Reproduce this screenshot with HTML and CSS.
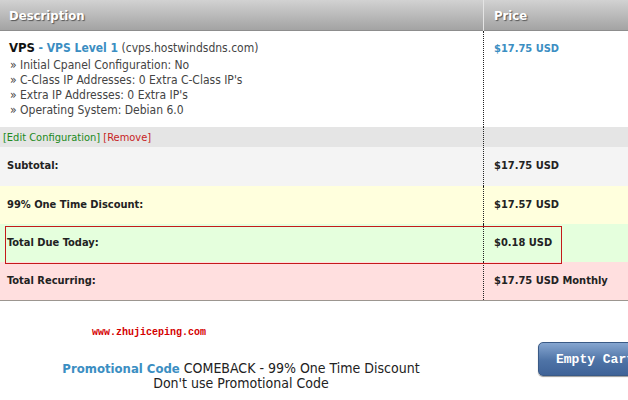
FILE: index.html
```html
<!DOCTYPE html>
<html>
<head>
<meta charset="utf-8">
<link rel="stylesheet" href="styles.css">
</head>
<body>
<div class="cart">
  <div class="row head">
    <div class="c1">Description</div>
    <div class="c2">Price</div>
  </div>
  <div class="row item">
    <div class="c1">
      <div class="title"><b class="prod">VPS</b> <span class="blue">- VPS Level 1</span> <span class="dom">(cvps.hostwindsdns.com)</span></div>
      <div class="opt">&raquo; Initial Cpanel Configuration: No</div>
      <div class="opt">&raquo; C-Class IP Addresses: 0 Extra C-Class IP's</div>
      <div class="opt">&raquo; Extra IP Addresses: 0 Extra IP's</div>
      <div class="opt">&raquo; Operating System: Debian 6.0</div>
    </div>
    <div class="c2"><span class="blue price">$17.75 USD</span></div>
  </div>
  <div class="row edit">
    <div class="c1"><span class="green">[Edit Configuration]</span> <span class="red">[Remove]</span></div>
    <div class="c2"></div>
  </div>
  <div class="row sum sub">
    <div class="c1">Subtotal:</div>
    <div class="c2">$17.75 USD</div>
  </div>
  <div class="row sum disc">
    <div class="c1">99% One Time Discount:</div>
    <div class="c2">$17.57 USD</div>
  </div>
  <div class="row sum due">
    <div class="c1">Total Due Today:</div>
    <div class="c2">$0.18 USD</div>
  </div>
  <div class="row sum rec">
    <div class="c1">Total Recurring:</div>
    <div class="c2">$17.75 USD Monthly</div>
  </div>
</div>
<div class="redbox"></div>
<div class="wm">www.zhujiceping.com</div>
<div class="bottom">
  <div class="promo">
    <div><b class="blue">Promotional Code</b> COMEBACK - 99% One Time Discount</div>
    <div>Don't use Promotional Code</div>
  </div>
  <button class="empty">Empty Cart</button>
</div>
</body>
</html>
```
FILE: styles.css
```css
html, body {
  margin: 0;
  padding: 0;
  background: #fff;
}
body {
  font-family: "DejaVu Sans Condensed", "DejaVu Sans", sans-serif;
  color: #333;
  width: 760px;
  position: relative;
}
.cart {
  border-bottom: 1px solid #9c9690;
}
.row {
  display: grid;
  grid-template-columns: 484px 1fr;
}
.row .c1 {
  border-right: 1px dotted #222;
  padding-left: 7px;
}
.row .c2 {
  padding-left: 10px;
}
.head {
  height: 30px;
  background: linear-gradient(#d2d2d2, #a3a3a3);
  border-bottom: 1px solid #8d8d8d;
  color: #fff;
  font-weight: bold;
  font-size: 13px;
  line-height: 31px;
  text-shadow: 1px 1px 1px #555;
}
.head .c1 {
  border-right: 1px solid #e4e4e4;
  padding-left: 9px;
}
.head .c2 { padding-left: 10px; }
.item {
  height: 96px;
  font-size: 12px;
}
.item .c1 { padding-left: 9px; padding-top: 9px; }
.item .c2 { padding-top: 10px; }
.title {
  font-size: 12px;
  line-height: 15px;
  margin-bottom: 2px;
}
.prod {
  font-size: 13px;
  color: #111;
}
.blue {
  color: #3b8ec2;
}
.title .blue { font-weight: bold; }
.dom { color: #444; }
.opt {
  line-height: 15px;
  color: #444;
  padding-left: 1px;
}
.price {
  font-weight: bold;
  font-size: 11px;
}
.edit {
  height: 20px;
  background: #e5e5e5;
  font-size: 11px;
  line-height: 21px;
}
.edit .c1 { padding-left: 3px; }
.green { color: #218a21; }
.red { color: #c81e1e; }
.sum {
  font-weight: bold;
  font-size: 11px;
  color: #222;
}
.sum .c1, .sum .c2 {
  line-height: 37px;
}
.sub { height: 39px; background: #f4f4f4; }
.disc { height: 38px; background: #ffffdd; }
.due { height: 38px; background: #e5ffdd; }
.rec { height: 38px; background: #ffdfdf; }
.redbox {
  position: absolute;
  left: 5px;
  top: 226px;
  width: 555px;
  height: 36px;
  border: 1px solid #c41a1a;
}
.wm {
  font-family: "Liberation Mono", monospace;
  font-weight: bold;
  font-size: 10px;
  color: #d40000;
  padding-left: 92px;
  margin-top: 26px;
  line-height: 12px;
}
.bottom {
  display: flex;
  align-items: flex-start;
  margin-top: 3px;
}
.promo {
  width: 482px;
  text-align: center;
  font-size: 14px;
  color: #222;
  line-height: 15px;
  padding-top: 19px;
}
.promo b { font-size: 13px; }
.empty {
  margin-left: 56px;
  height: 34px;
  width: 120px;
  border: 1px solid #3a5a86;
  border-radius: 5px;
  background: linear-gradient(#86a6d0, #4e73a6 55%, #3f6398);
  color: #fff;
  font-family: "Liberation Mono", monospace;
  font-weight: bold;
  font-size: 13px;
  text-align: left;
  padding-left: 17px;
  box-shadow: 0 1px 1px #999;
}
```
